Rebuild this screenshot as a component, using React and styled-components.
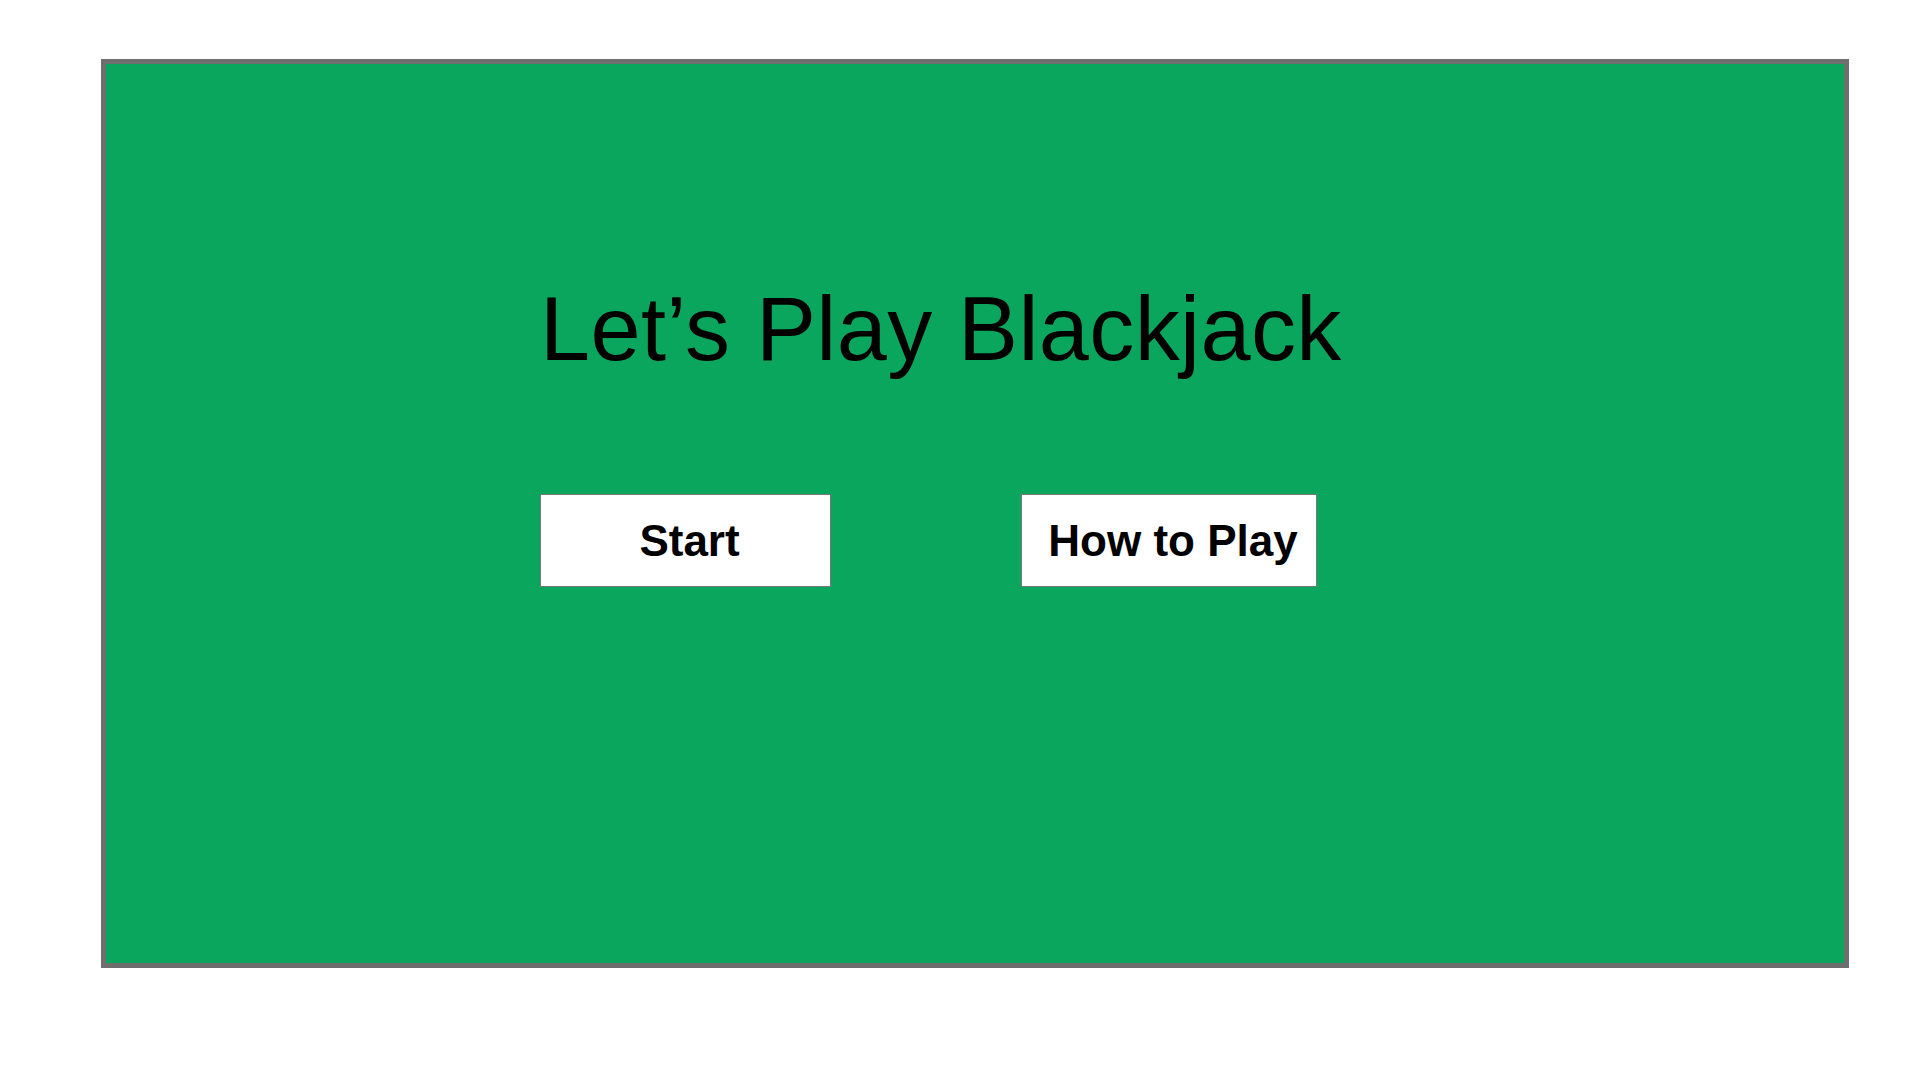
import styled, { createGlobalStyle } from "styled-components"

const GlobalStyle = createGlobalStyle`
    html, body {
        margin: 0;
        padding: 0;
        background: #ffffff;
    }
    body {
        font-family: "Liberation Sans", Arial, Helvetica, sans-serif;
    }
`

const Page = styled.div`
    width: 1920px;
    height: 1080px;
    padding: 59px 0 0 101px;
    box-sizing: border-box;
`

const Table = styled.div`
    width: 1748px;
    height: 909px;
    box-sizing: border-box;
    border: 5px solid #6e6e6e;
    background-color: #0ba65e;
    padding: 220px 0 0 434px;
    display: flex;
    flex-direction: column;
    align-items: flex-start;
`

const Title = styled.h1`
    margin: 0;
    font-size: 90px;
    line-height: 90px;
    font-weight: 400;
    letter-spacing: 0.4px;
    color: #000000;
    white-space: nowrap;
`

const Buttons = styled.div`
    display: flex;
    gap: 190px;
    margin-top: 120px;
`

const Button = styled.button`
    width: ${props => props.width}px;
    height: 93px;
    box-sizing: border-box;
    border: 1px solid #777777;
    background-color: #ffffff;
    color: #000000;
    font-family: "Liberation Sans", Arial, Helvetica, sans-serif;
    font-weight: 700;
    font-size: 44px;
    line-height: 44px;
    padding: 0 0 0 8px;
    display: flex;
    align-items: center;
    justify-content: center;
    cursor: pointer;
    white-space: nowrap;
`

const App = () => {
    return (
        <>
            <GlobalStyle />
            <Page>
                <Table>
                    <Title>Let’s Play Blackjack</Title>
                    <Buttons>
                        <Button width={291}>Start</Button>
                        <Button width={296}>How to Play</Button>
                    </Buttons>
                </Table>
            </Page>
        </>
    )
}

export default App
